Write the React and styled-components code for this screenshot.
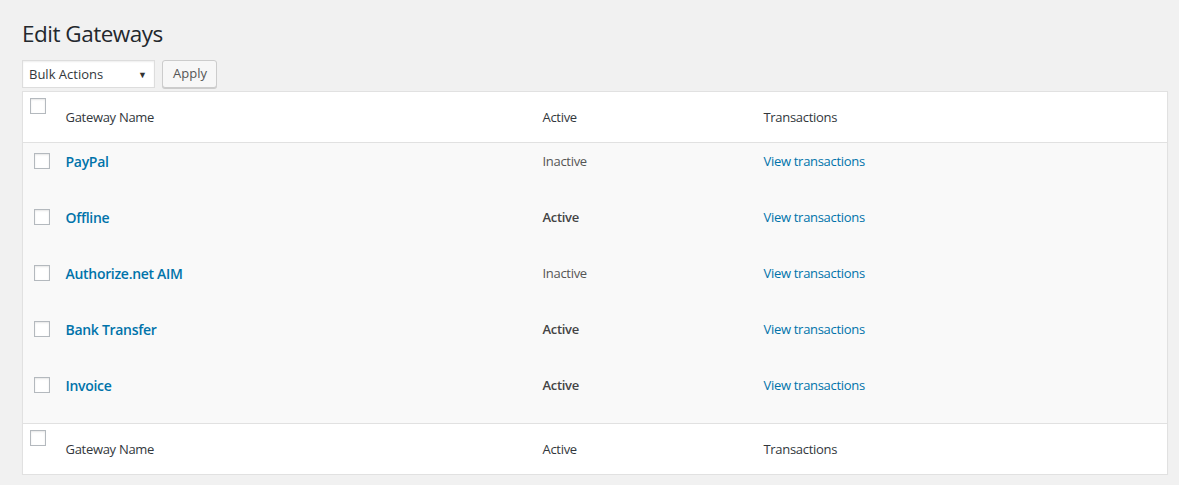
import React from "react";
import styled, { createGlobalStyle } from "styled-components";

const Global = createGlobalStyle`
  html, body { margin: 0; padding: 0; background: #f1f1f1; }
  body {
    font-family: "Open Sans", "Noto Sans", "Liberation Sans", sans-serif;
    font-size: 13px;
    color: #444;
  }
`;

const Wrap = styled.div`
  padding: 0 12px 0 22px;
  display: flex;
  flex-direction: column;
`;

const Title = styled.h1`
  margin: 19px 0 0;
  font-size: 22.5px;
  font-weight: 400;
  line-height: 30px;
  color: #23282d;
  letter-spacing: -0.5px;
`;

const Toolbar = styled.div`
  display: flex;
  align-items: center;
  gap: 7px;
  margin-top: 10px;
  height: 30px;
`;

const SelectBox = styled.div`
  position: relative;
  width: 133px;
  height: 28px;
  box-sizing: border-box;
  background: #fff;
  border: 1px solid #ddd;
  box-shadow: inset 0 1px 2px rgba(0, 0, 0, 0.07);
  display: flex;
  align-items: center;
  padding: 0 6px;
  color: #32373c;
  font-size: 13px;
`;

const Caret = styled.span`
  margin-left: auto;
  font-size: 9px;
  color: #333;
  margin-right: 1px;
`;

const Button = styled.button`
  height: 28px;
  width: 55px;
  box-sizing: border-box;
  background: #f7f7f7;
  border: 1px solid #ccc;
  border-radius: 3px;
  box-shadow: 0 1px 0 #ccc;
  color: #555;
  font-family: inherit;
  font-size: 13px;
  padding: 0 10px 2px;
  margin-top: -1px;
`;

const Table = styled.table`
  margin-top: 2px;
  width: 1146px;
  border-collapse: collapse;
  table-layout: fixed;
  border: 1px solid #e1e1e1;
  box-shadow: 0 1px 1px rgba(0, 0, 0, 0.04);
  background: #fff;
  letter-spacing: -0.3px;
`;

const Head = styled.tr`
  height: 51px;
  background: #fff;
  border-${(p) => (p.$foot ? "top" : "bottom")}: 1px solid #e1e1e1;
`;

const HeadCell = styled.th`
  text-align: left;
  font-weight: 400;
  color: #32373c;
  font-size: 13px;
  padding: 0 10px;
  vertical-align: middle;
`;

const CheckCell = styled.td`
  vertical-align: top;
  padding: ${(p) => (p.$head ? "6px 0 0 7px" : "10px 0 0 11px")};
`;

const Check = styled.span`
  display: block;
  width: 16px;
  height: 16px;
  box-sizing: border-box;
  border: 1px solid #b4b9be;
  background: #fff;
  box-shadow: inset 0 1px 2px rgba(0, 0, 0, 0.1);
`;

const Row = styled.tr`
  height: 56px;
  background: #f9f9f9;
  &:last-child {
    height: 57px;
  }
`;

const Cell = styled.td`
  vertical-align: top;
  padding: 9px 10px 0;
  line-height: 19px;
  font-size: 13px;
  color: ${(p) => (p.$active ? "#444" : "#555")};
  font-weight: ${(p) => (p.$active ? 600 : 400)};
`;

const NameLink = styled.a`
  color: #0073aa;
  font-weight: 600;
  font-size: 14px;
  text-decoration: none;
`;

const Link = styled.a`
  color: #0073aa;
  font-size: 13px;
  text-decoration: none;
`;

const gateways = [
  { name: "PayPal", active: false },
  { name: "Offline", active: true },
  { name: "Authorize.net AIM", active: false },
  { name: "Bank Transfer", active: true },
  { name: "Invoice", active: true },
];

function HeaderRow({ foot }) {
  return (
    <Head $foot={foot}>
      <CheckCell $head>
        <Check />
      </CheckCell>
      <HeadCell>Gateway Name</HeadCell>
      <HeadCell>Active</HeadCell>
      <HeadCell>Transactions</HeadCell>
    </Head>
  );
}

export default function App() {
  return (
    <>
      <Global />
      <Wrap>
        <Title>Edit Gateways</Title>
        <Toolbar>
          <SelectBox>
            Bulk Actions
            <Caret>▼</Caret>
          </SelectBox>
          <Button>Apply</Button>
        </Toolbar>
        <Table>
          <colgroup>
            <col style={{ width: 33 }} />
            <col style={{ width: 477 }} />
            <col style={{ width: 221 }} />
            <col />
          </colgroup>
          <thead>
            <HeaderRow />
          </thead>
          <tbody>
            {gateways.map((g) => (
              <Row key={g.name}>
                <CheckCell>
                  <Check />
                </CheckCell>
                <Cell>
                  <NameLink href="#">{g.name}</NameLink>
                </Cell>
                <Cell $active={g.active}>{g.active ? "Active" : "Inactive"}</Cell>
                <Cell>
                  <Link href="#">View transactions</Link>
                </Cell>
              </Row>
            ))}
          </tbody>
          <tfoot>
            <HeaderRow foot />
          </tfoot>
        </Table>
      </Wrap>
    </>
  );
}
